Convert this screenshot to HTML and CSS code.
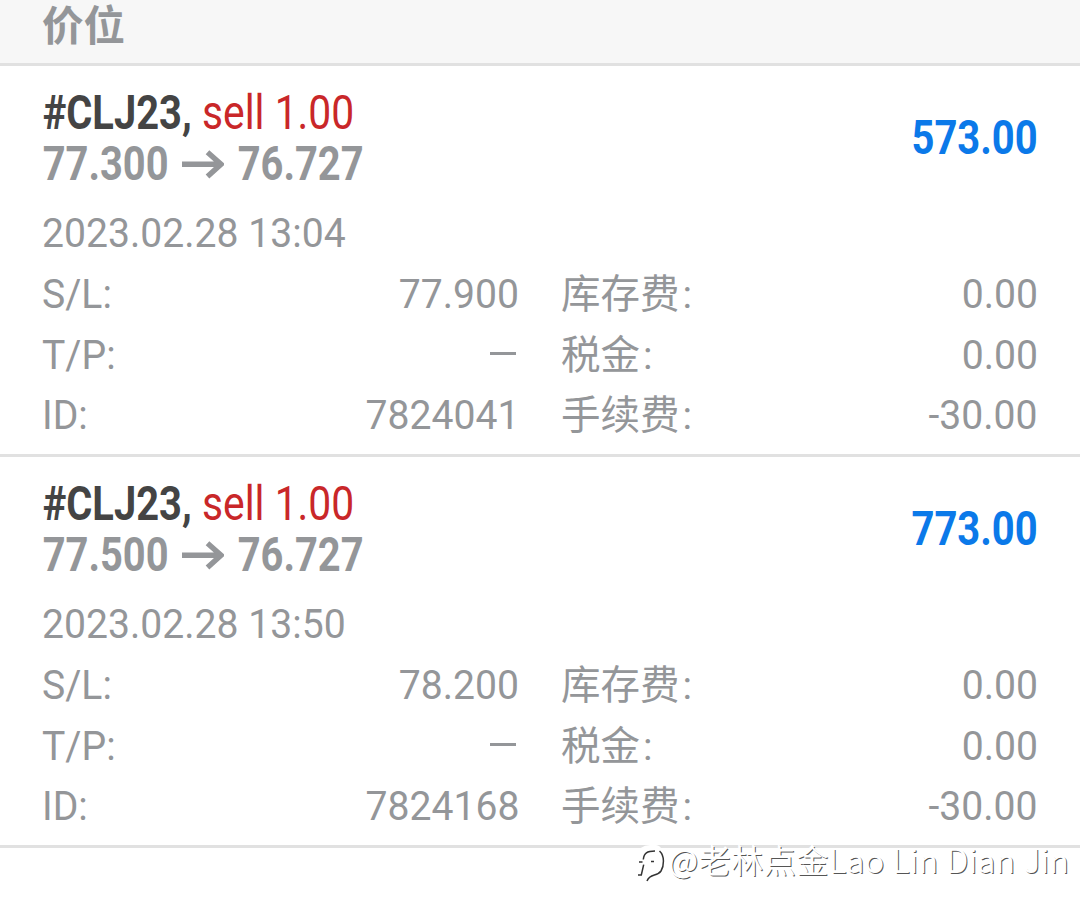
FILE: index.html
```html
<!DOCTYPE html>
<html lang="zh-CN"><head><meta charset="utf-8"><title>价位</title><link rel="stylesheet" href="styles.css"></head>
<body>
<header class="header"><h1 class="heading">价位</h1></header>
<main>
<article class="deal">
<div class="summary"><div>
<div class="title"><span class="symbol fit">#CLJ23,</span><span class="side fit">sell 1.00</span></div>
<div class="prices"><span class="open fit">77.300</span><svg class="arrow" viewBox="0 0 44 32"><path d="M2 15.2H41M27.5 3.2L41 15.2L27.5 27.4"/></svg><span class="close fit">76.727</span></div>
</div><div class="profit">573.00</div></div>
<div class="date">2023.02.28 13:04</div>
<div class="details">
<div class="row"><span>S/L:</span><span class="num">77.900</span></div><div class="row"><span class="cn">库存费<i>:</i></span><span class="num">0.00</span></div>
<div class="row"><span>T/P:</span><span class="dash"></span></div><div class="row"><span class="cn">税金<i>:</i></span><span class="num">0.00</span></div>
<div class="row"><span>ID:</span><span class="num">7824041</span></div><div class="row"><span class="cn">手续费<i>:</i></span><span class="num">-30.00</span></div>
</div>
</article>
<article class="deal">
<div class="summary"><div>
<div class="title"><span class="symbol fit">#CLJ23,</span><span class="side fit">sell 1.00</span></div>
<div class="prices"><span class="open fit">77.500</span><svg class="arrow" viewBox="0 0 44 32"><path d="M2 15.2H41M27.5 3.2L41 15.2L27.5 27.4"/></svg><span class="close fit">76.727</span></div>
</div><div class="profit">773.00</div></div>
<div class="date">2023.02.28 13:50</div>
<div class="details">
<div class="row"><span>S/L:</span><span class="num">78.200</span></div><div class="row"><span class="cn">库存费<i>:</i></span><span class="num">0.00</span></div>
<div class="row"><span>T/P:</span><span class="dash"></span></div><div class="row"><span class="cn">税金<i>:</i></span><span class="num">0.00</span></div>
<div class="row"><span>ID:</span><span class="num">7824168</span></div><div class="row"><span class="cn">手续费<i>:</i></span><span class="num">-30.00</span></div>
</div>
</article>
</main>
<div class="watermark"><svg class="mark" viewBox="0 0 32 42"><path class="halo" d="M3 32L1 14Q3 3 14 3H20Q28 4 26 18Q25 31 14 33Z"/><path d="M3 20H6.5M7.7 22.7L5.3 33H2M7.3 17.5C8 11 11 9 19 9M15 19.5H18M23.5 9C29 14 28 24 25 29C21 35 14 31 11 39"/></svg><span class="handle">@老林点金</span><span class="name">Lao Lin Dian Jin</span></div>
</body></html>
```

FILE: styles.css
```css
*{box-sizing:border-box}
body{margin:0;width:1080px;height:914px;overflow:hidden;background:#fff;color:#949699;font-family:Roboto,"Noto Sans CJK SC",sans-serif;position:relative}
.header{height:66px;background:#f7f7f7;border-bottom:3px solid #e1e1e1;padding:2px 0 0 42px}
.heading{margin:0;font-size:41.5px;line-height:50px;font-weight:700}
.deal{height:391px;border-bottom:3px solid #e1e1e1;padding:21px 43px 0 42px}
.summary{display:flex;justify-content:space-between;height:112px}
.title,.prices{display:flex;height:51px;line-height:51px;font-size:48px;white-space:nowrap}
.fit{display:block;transform:translateX(.7px) scaleX(.83);transform-origin:left center}
.symbol{width:160px;color:#444;font-weight:700}
.side{color:#c92729;transform:scaleX(.85)}
.open,.close{font-weight:700}
.open{width:138px}
.arrow{width:44px;height:32px;margin:11px 13px 0 0;fill:none;stroke:#949699;stroke-width:5.4}
.profit{font-size:48px;line-height:56px;margin-top:23px;font-weight:700;color:#0b79e9;transform:translateX(1px) scaleX(.832);transform-origin:right}
.date{font-size:40px;line-height:70px;height:64px;font-weight:400;transform:scaleX(.978);transform-origin:left}
.details{display:grid;grid-template-columns:476px 475px;column-gap:44px;grid-auto-rows:60.5px}
.row{display:flex;justify-content:space-between;align-items:center;font-size:40px;line-height:60px;white-space:nowrap}
.row>span{transform:translateY(2px) scaleX(.978);transform-origin:left}
.row>.num{transform-origin:right;margin-right:-1px}
.row>.cn{font-size:39.5px;transform:translateY(2px);margin-left:-1px}
.cn i{font-style:normal;margin-left:3px}
.row>.dash{width:26px;height:3px;background:#949699;margin-right:2px;transform:none}
.watermark{position:absolute;left:636px;top:838px;display:flex;font-family:"Noto Sans CJK SC",sans-serif;font-weight:300;font-size:32px;line-height:42px;color:#fff;text-shadow:-1px -1px 0 #fff,1px 1px 0 #555;white-space:nowrap}
.mark{width:32px;height:42px;margin:4px 1px 0 0;fill:none;stroke:#333;stroke-width:1.5}
.halo{fill:#fff;stroke:none}
.handle{letter-spacing:.6px}
.name{font-size:32.5px;letter-spacing:.55px}
```
